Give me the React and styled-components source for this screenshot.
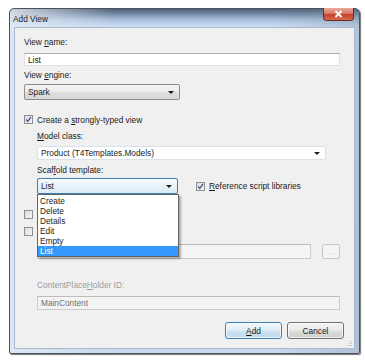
import React from 'react'
import styled, { createGlobalStyle } from 'styled-components'

const GlobalStyle = createGlobalStyle`
    html, body {
        margin: 0;
        padding: 0;
        background: #ffffff;
    }
    body {
        font-family: 'Liberation Sans', Arial, sans-serif;
        font-size: 8.3px;
        color: #1b1b1b;
    }
    * {
        box-sizing: border-box;
    }
`

const Page = styled.div`
    padding: 8px 0 0 9px;
    width: 365px;
    height: 364px;
`

const Window = styled.div`
    width: 351px;
    height: 346px;
    display: flex;
    flex-direction: column;
    border: 1px solid #4b525c;
    border-radius: 5px 5px 2px 2px;
    box-shadow: 1px 1px 1px rgba(0, 0, 0, 0.55);
    background:
        linear-gradient(to right, rgba(226, 233, 241, 0.85) 0%, rgba(226, 233, 241, 0) 30%,
            rgba(226, 233, 241, 0) 75%, rgba(120, 135, 155, 0.3) 100%),
        linear-gradient(to bottom, #4f5e74 0px, #758aa6 5px, #abc2de 11px, #c9dcf0 17px, #c8daef 100%);
`

const TitleBar = styled.div`
    height: 18px;
    display: flex;
    align-items: flex-start;
    justify-content: space-between;
    padding-left: 3px;
`

const Title = styled.span`
    margin-top: 5px;
    font-size: 8.3px;
    color: #1a1a1a;
`

const CloseButton = styled.div`
    width: 31px;
    height: 13px;
    margin-right: 5px;
    margin-top: -1px;
    border: 1px solid #6e2a20;
    border-top: none;
    border-radius: 0 0 4px 4px;
    background: linear-gradient(to bottom, #e9ab9b 0%, #d77a66 45%, #c2422b 55%, #d66a4e 100%);
    display: flex;
    align-items: center;
    justify-content: center;
`

const Client = styled.div`
    flex: 1;
    margin: 0 4px 4px 4px;
    border: 1px solid #a6b9cf;
    background: #f0f0f0;
    padding: 9px 12px 0 9px;
    display: flex;
    flex-direction: column;
    position: relative;
`

const Label = styled.div`
    height: 11px;
    line-height: 11px;
    margin-top: ${(props) => props.mt || 0}px;
    color: ${(props) => (props.disabled ? '#9c9c9c' : '#1b1b1b')};
    white-space: nowrap;
`

const TextBox = styled.div`
    height: ${(props) => props.h || 13}px;
    margin-top: ${(props) => props.mt || 0}px;
    margin-right: 2px;
    border: 1px solid ${(props) => (props.disabled ? '#cbcbcb' : '#dde1e7')};
    border-top-color: ${(props) => (props.disabled ? '#bdbdbd' : '#abadb3')};
    background: ${(props) => (props.disabled ? '#f4f4f4' : '#ffffff')};
    color: ${(props) => (props.disabled ? '#707070' : '#1b1b1b')};
    padding-left: 3px;
    display: flex;
    align-items: center;
    flex: ${(props) => (props.grow ? 1 : 'none')};
`

const Combo = styled.div`
    width: ${(props) => (props.w ? props.w + 'px' : 'auto')};
    height: ${(props) => props.h || 16}px;
    margin-top: ${(props) => props.mt || 0}px;
    margin-right: ${(props) => (props.w ? 0 : 16)}px;
    border: 1px solid ${(props) => props.border || '#8c8c8c'};
    border-radius: 2px;
    background: ${(props) => props.bg || 'linear-gradient(to bottom, #f4f4f4 0%, #ececec 48%, #dedede 52%, #d6d6d6 100%)'};
    display: flex;
    align-items: center;
    justify-content: space-between;
    padding: 0 5px 0 3px;
    position: relative;
`

const Arrow = styled.span`
    width: 0;
    height: 0;
    border-left: 3px solid transparent;
    border-right: 3px solid transparent;
    border-top: 3px solid #1b1b1b;
`

const CheckRow = styled.div`
    display: flex;
    align-items: center;
    gap: 4px;
    height: 11px;
    margin-top: ${(props) => props.mt || 0}px;
    white-space: nowrap;
`

const Box = styled.span`
    width: 9px;
    height: 9px;
    border: 1px solid #8f8f8f;
    background: linear-gradient(135deg, #dcdcdc 0%, #f6f6f6 100%);
    display: flex;
    align-items: center;
    justify-content: center;
    flex: none;
`

const Indented = styled.div`
    display: flex;
    flex-direction: column;
    padding-left: 13px;
`

const ScaffoldRow = styled.div`
    display: flex;
    align-items: center;
    gap: 18px;
    margin-top: 2px;
`

const ComboWrap = styled.div`
    position: relative;
`

const DropList = styled.div`
    position: absolute;
    top: 100%;
    left: 0;
    width: 142px;
    padding-top: 1px;
    background: #ffffff;
    border: 1px solid #646464;
    box-shadow: 2px 2px 2px rgba(0, 0, 0, 0.3);
    z-index: 5;
`

const DropItem = styled.div`
    height: 10px;
    line-height: 10px;
    padding-left: 2px;
    background: ${(props) => (props.selected ? '#3399ff' : 'transparent')};
    color: ${(props) => (props.selected ? '#ffffff' : '#1b1b1b')};
`

const FieldRow = styled.div`
    display: flex;
    align-items: center;
    gap: 9px;
    margin-top: 7px;
`

const SmallButton = styled.div`
    width: 18px;
    height: 15px;
    margin-right: 2px;
    border: 1px solid #c6c6c6;
    border-radius: 2px;
    background: #f4f4f4;
    color: #a8a8a8;
    font-size: 6px;
    display: flex;
    align-items: center;
    justify-content: center;
`

const ButtonRow = styled.div`
    display: flex;
    justify-content: flex-end;
    gap: 5px;
    margin-top: 12px;
    margin-right: -2px;
`

const Button = styled.div`
    width: 57px;
    height: 17px;
    border: 1px solid ${(props) => (props.isDefault ? '#3c7fb1' : '#707070')};
    border-radius: 3px;
    background: ${(props) =>
        props.isDefault
            ? 'linear-gradient(to bottom, #f2f8fc 0%, #e3eef7 48%, #cde2f2 52%, #c1d9ec 100%)'
            : 'linear-gradient(to bottom, #f2f2f2 0%, #ebebeb 48%, #dddddd 52%, #cfcfcf 100%)'};
    box-shadow: inset 0 0 0 1px rgba(255, 255, 255, 0.7);
    display: flex;
    align-items: center;
    justify-content: center;
    color: #1b1b1b;
`

const Grip = styled.svg`
    position: absolute;
    right: 1px;
    bottom: 1px;
`

const Check = () => (
    <svg width="7" height="7" viewBox="0 0 7 7">
        <path d="M1 3.5 L2.8 5.5 L6 1" fill="none" stroke="#4a5d8a" strokeWidth="1.3" />
    </svg>
)

const templates = ['Create', 'Delete', 'Details', 'Edit', 'Empty', 'List']

const App = () => (
    <Page>
        <GlobalStyle />
        <Window>
            <TitleBar>
                <Title>Add View</Title>
                <CloseButton>
                    <svg width="9" height="8" viewBox="0 0 9 8">
                        <path d="M1.5 1 L7.5 7 M7.5 1 L1.5 7" stroke="#ffffff" strokeWidth="2" />
                    </svg>
                </CloseButton>
            </TitleBar>
            <Client>
                <Label>View <u>n</u>ame:</Label>
                <TextBox mt={5}>List</TextBox>
                <Label mt={4}>View <u>e</u>ngine:</Label>
                <Combo w={156} mt={3}>
                    <span>Spark</span>
                    <Arrow />
                </Combo>
                <CheckRow mt={14}>
                    <Box><Check /></Box>
                    <span>Create a <u>s</u>trongly-typed view</span>
                </CheckRow>
                <Indented>
                    <Label mt={6}><u>M</u>odel class:</Label>
                    <Combo h={14} mt={4} border="#dde1e7" bg="#ffffff">
                        <span>Product (T4Templates.Models)</span>
                        <Arrow />
                    </Combo>
                    <Label mt={5}>Scaf<u>f</u>old template:</Label>
                    <ScaffoldRow>
                        <ComboWrap>
                            <Combo w={141} border="#3c7fb1" bg="linear-gradient(to bottom, #f6fafd 0%, #e9f2f9 50%, #dcebf6 100%)">
                                <span>List</span>
                                <Arrow />
                            </Combo>
                            <DropList>
                                {templates.map((t) => (
                                    <DropItem key={t} selected={t === 'List'}>{t}</DropItem>
                                ))}
                            </DropList>
                        </ComboWrap>
                        <CheckRow>
                            <Box><Check /></Box>
                            <span><u>R</u>eference script libraries</span>
                        </CheckRow>
                    </ScaffoldRow>
                </Indented>
                <CheckRow mt={15}>
                    <Box />
                </CheckRow>
                <CheckRow mt={6}>
                    <Box />
                </CheckRow>
                <Indented>
                    <FieldRow>
                        <TextBox h={15} grow disabled />
                        <SmallButton>...</SmallButton>
                    </FieldRow>
                    <Label mt={21} disabled>ContentPlace<u>H</u>older ID:</Label>
                    <TextBox h={14} mt={5} disabled>MainContent</TextBox>
                </Indented>
                <ButtonRow>
                    <Button isDefault><span><u>A</u>dd</span></Button>
                    <Button>Cancel</Button>
                </ButtonRow>
                <Grip width="8" height="8" viewBox="0 0 8 8">
                    {[[6, 2], [6, 4], [4, 4], [6, 6], [4, 6], [2, 6]].map(([x, y]) => (
                        <rect key={x + '-' + y} x={x} y={y} width="1" height="1" fill="#b5b5b5" />
                    ))}
                </Grip>
            </Client>
        </Window>
    </Page>
)

export default App
